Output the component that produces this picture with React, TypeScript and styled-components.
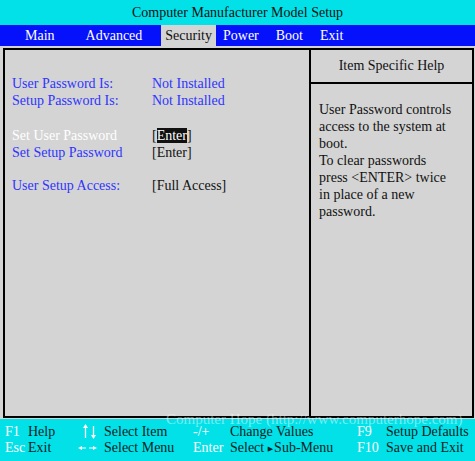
import React from "react";
import styled, { createGlobalStyle } from "styled-components";

const Global = createGlobalStyle`
  html, body { margin: 0; padding: 0; background: #d4d4d4; }
  body { font-family: "Liberation Serif", "Times New Roman", serif; }
`;

const Screen = styled.div`
  position: relative;
  width: 475px;
  height: 461px;
  background: #d4d4d4;
  display: flex;
  flex-direction: column;
  overflow: hidden;
  font-family: "Liberation Serif", "Times New Roman", serif;
  font-size: 14px;
`;

const TitleBar = styled.div`
  height: 25px;
  background: #02e1e8;
  color: #111;
  display: flex;
  align-items: center;
  justify-content: center;
  font-size: 14px;
  padding-top: 1px;
  box-sizing: border-box;
`;

const MenuBar = styled.div`
  height: 21px;
  background: #0611fb;
  display: flex;
  align-items: stretch;
`;

const Tab = styled.div<{ $ml: number; $active?: boolean }>`
  margin-left: ${(p) => p.$ml}px;
  padding: 0 4px;
  display: flex;
  align-items: center;
  color: ${(p) => (p.$active ? "#111" : "#fff")};
  background: ${(p) => (p.$active ? "#d4d4d4" : "transparent")};
  font-size: 14px;
`;

const Panel = styled.div`
  margin: 2px 1px 1px 3px;
  height: 370px;
  box-sizing: border-box;
  border: 2px solid #000;
  display: grid;
  grid-template-columns: 304px 1fr;
`;

const Settings = styled.div`
  padding: 25px 0 0 7px;
  display: flex;
  flex-direction: column;
`;

const Row = styled.div`
  height: 17px;
  display: grid;
  grid-template-columns: 140px 1fr;
  align-items: center;
  white-space: nowrap;
`;

const Spacer = styled.div<{ $h: number }>`
  height: ${(p) => p.$h}px;
`;

const Label = styled.span<{ $selected?: boolean }>`
  color: ${(p) => (p.$selected ? "#fff" : "#2f35ff")};
`;

const Value = styled.span<{ $plain?: boolean }>`
  color: ${(p) => (p.$plain ? "#111" : "#2f35ff")};
`;

const Highlight = styled.span`
  background: #111;
  color: #fff;
`;

const Help = styled.div`
  border-left: 2px solid #000;
  display: flex;
  flex-direction: column;
`;

const HelpHeader = styled.div`
  height: 34px;
  border-bottom: 2px solid #000;
  display: flex;
  align-items: center;
  justify-content: center;
  color: #111;
  box-sizing: border-box;
`;

const HelpText = styled.div`
  padding: 17px 6px 0 8px;
  line-height: 17px;
  color: #111;
`;

const Footer = styled.div`
  flex: 1;
  background: #02e1e8;
  display: grid;
  grid-template-columns: 23px 50px 26px 89px 37px 127px 29px 1fr;
  grid-auto-rows: 16px;
  align-content: start;
  padding: 5px 0 0 5px;
  align-items: center;
  white-space: nowrap;
`;

const Key = styled.span`
  color: #fff;
`;

const Desc = styled.span`
  color: #0a2424;
`;

const ArrowCell = styled.span`
  display: flex;
  align-items: center;
  height: 16px;
`;

const Watermark = styled.div`
  position: absolute;
  left: 166px;
  top: 411px;
  color: rgba(255, 255, 255, 0.45);
  font-size: 15px;
  pointer-events: none;
  white-space: nowrap;
`;

const Tri = styled.span`
  font-family: "DejaVu Sans", sans-serif;
  font-size: 7px;
  margin: 0 1px 0 0;
  vertical-align: 1px;
`;

const UpDown = () => (
  <svg width="19" height="16" viewBox="0 0 19 16" style={{ marginLeft: 5 }}>
    <g stroke="#fff" strokeWidth="1.3" fill="#fff">
      <line x1="2.5" y1="3" x2="2.5" y2="14" />
      <polygon points="0,4 2.5,0 5,4" stroke="none" />
      <line x1="10.5" y1="2" x2="10.5" y2="12" />
      <polygon points="8,11 10.5,15 13,11" stroke="none" />
    </g>
  </svg>
);

const LeftRight = () => (
  <svg width="22" height="10" viewBox="0 0 22 10">
    <g stroke="#fff" strokeWidth="1" fill="#fff">
      <line x1="3" y1="5" x2="8" y2="5" />
      <polygon points="0,5 4,3 4,7" stroke="none" />
      <line x1="11" y1="5" x2="16" y2="5" />
      <polygon points="19,5 15,3 15,7" stroke="none" />
    </g>
  </svg>
);

export default function App() {
  return (
    <>
      <Global />
      <Screen>
        <TitleBar>Computer Manufacturer Model Setup</TitleBar>
        <MenuBar>
          <Tab $ml={21}>Main</Tab>
          <Tab $ml={23}>Advanced</Tab>
          <Tab $ml={15} $active>Security</Tab>
          <Tab $ml={3}>Power</Tab>
          <Tab $ml={9}>Boot</Tab>
          <Tab $ml={9}>Exit</Tab>
        </MenuBar>
        <Panel>
          <Settings>
            <Row>
              <Label>User Password Is:</Label>
              <Value>Not Installed</Value>
            </Row>
            <Row>
              <Label>Setup Password Is:</Label>
              <Value>Not Installed</Value>
            </Row>
            <Spacer $h={18} />
            <Row>
              <Label $selected>Set User Password</Label>
              <Value $plain>
                [<Highlight>Enter</Highlight>]
              </Value>
            </Row>
            <Row>
              <Label>Set Setup Password</Label>
              <Value $plain>[Enter]</Value>
            </Row>
            <Spacer $h={16} />
            <Row>
              <Label>User Setup Access:</Label>
              <Value $plain>[Full Access]</Value>
            </Row>
          </Settings>
          <Help>
            <HelpHeader>Item Specific Help</HelpHeader>
            <HelpText>
              User Password controls
              <br />
              access to the system at
              <br />
              boot.
              <br />
              To clear passwords
              <br />
              press &lt;ENTER&gt; twice
              <br />
              in place of a new
              <br />
              password.
            </HelpText>
          </Help>
        </Panel>
        <Footer>
          <Key>F1</Key>
          <Desc>Help</Desc>
          <ArrowCell>
            <UpDown />
          </ArrowCell>
          <Desc>Select Item</Desc>
          <Key>-/+</Key>
          <Desc>Change Values</Desc>
          <Key>F9</Key>
          <Desc>Setup Defaults</Desc>
          <Key>Esc</Key>
          <Desc>Exit</Desc>
          <ArrowCell>
            <LeftRight />
          </ArrowCell>
          <Desc>Select Menu</Desc>
          <Key>Enter</Key>
          <Desc>
            Select <Tri>▶</Tri>Sub-Menu
          </Desc>
          <Key>F10</Key>
          <Desc>Save and Exit</Desc>
        </Footer>
        <Watermark>Computer Hope (http://www.computerhope.com)</Watermark>
      </Screen>
    </>
  );
}
